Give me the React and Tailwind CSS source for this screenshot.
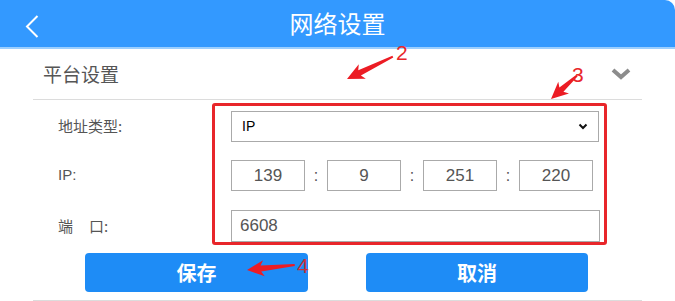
export default function App() {
  const cjk = { fontFamily: '"Microsoft YaHei", "Noto Sans CJK SC", "Liberation Sans", sans-serif' };
  const num = { fontFamily: '"Liberation Sans", Arial, sans-serif' };

  const arrows = [
    { x: 347, y: 79, angle: -26, len: 51 },
    { x: 551, y: 99, angle: -42, len: 35 },
    { x: 247, y: 270, angle: -6, len: 48 },
  ];

  const Arrow = ({ x, y, angle, len }) => (
    <polygon
      transform={`translate(${x} ${y}) rotate(${angle})`}
      points={`0,0 17,-8 14,-3 ${len},-1 ${len},1 14,3 17,8`}
      fill="#ec1c24"
    />
  );

  return (
    <div className="relative w-[675px] h-[301px] bg-white overflow-hidden" style={cjk}>
      {/* header */}
      <div className="h-[49px] bg-[#3399ff] rounded-tr-[10px] border-b-2 border-[#9ccfff] flex items-center relative">
        <svg className="absolute left-[25px] top-[15px]" width="14" height="23" viewBox="0 0 14 23">
          <path d="M12.5 1 L2 11.5 L12.5 22" fill="none" stroke="#fff" strokeWidth="2" />
        </svg>
        <div className="flex-1 text-center text-white text-[24px] leading-none pb-[2px]">网络设置</div>
      </div>

      <div className="mx-[33px] w-[609px]">
        {/* section header */}
        <div className="h-[51px] flex items-center justify-between border-b border-[#dcdcdc] pl-[10px] pr-[11px]">
          <span className="text-[19px] text-[#555]">平台设置</span>
          <svg width="20" height="12" viewBox="0 0 20 12">
            <path d="M2 2 L10 9 L18 2" fill="none" stroke="#8c8c8c" strokeWidth="4" />
          </svg>
        </div>

        {/* form */}
        <div className="mt-[11px] flex flex-col gap-[18px]">
          <div className="flex items-center h-[31px]">
            <div className="w-[198px] pl-[25px] text-[15px] text-[#555]">地址类型:</div>
            <div className="w-[368px] h-[31px] border border-[#aaa] flex items-center justify-between pl-[10px] pr-[10px]">
              <span className="text-[14px] text-black" style={num}>IP</span>
              <svg width="10" height="7" viewBox="0 0 10 7">
                <path d="M1.5 1.5 L5 5 L8.5 1.5" fill="none" stroke="#111" strokeWidth="2" />
              </svg>
            </div>
          </div>

          <div className="flex items-center h-[31px]">
            <div className="w-[198px] pl-[25px] text-[15px] text-[#555]" style={num}>IP:</div>
            <div className="flex items-center">
              {['139', '9', '251', '220'].map((v, i) => (
                <div key={v} className="flex items-center">
                  {i > 0 && <span className="w-[22px] text-center text-[16px] text-[#555]" style={num}>:</span>}
                  <div className="w-[74px] h-[31px] border border-[#aaa] flex items-center justify-center text-[17px] text-[#555]" style={num}>
                    {v}
                  </div>
                </div>
              ))}
            </div>
          </div>

          <div className="flex items-center h-[32px] mt-[1px]">
            <div className="w-[198px] pl-[25px] text-[15px] text-[#555] flex">
              <span>端</span>
              <span className="ml-[16px]">口:</span>
            </div>
            <div className="w-[369px] h-[32px] border border-[#aaa] flex items-center pl-[8px] text-[17px] text-[#555]" style={num}>
              6608
            </div>
          </div>
        </div>

        {/* buttons */}
        <div className="mt-[11px] flex pl-[52px] gap-[58px]">
          <button className="w-[223px] h-[39px] rounded-[4px] bg-[#1e8cf6] text-white text-[20px] font-bold">保存</button>
          <button className="w-[222px] h-[39px] rounded-[4px] bg-[#1e8cf6] text-white text-[20px] font-bold">取消</button>
        </div>
        <div className="mt-[8px] border-b border-[#dcdcdc]" />
      </div>

      {/* annotations */}
      <div className="absolute left-[212px] top-[103px] w-[395px] h-[142px] border-[3px] border-[#e8262a] rounded-[3px] pointer-events-none" />
      <svg className="absolute left-0 top-0 pointer-events-none" width="675" height="301">
        {arrows.map((a, i) => <Arrow key={i} {...a} />)}
      </svg>
      <span className="absolute left-[396px] top-[42px] text-[21px] leading-none text-[#e8262a]" style={num}>2</span>
      <span className="absolute left-[572px] top-[64px] text-[21px] leading-none text-[#e8262a]" style={num}>3</span>
      <span className="absolute left-[297px] top-[255px] text-[21px] leading-none text-[#c8303a]" style={num}>4</span>
    </div>
  );
}
